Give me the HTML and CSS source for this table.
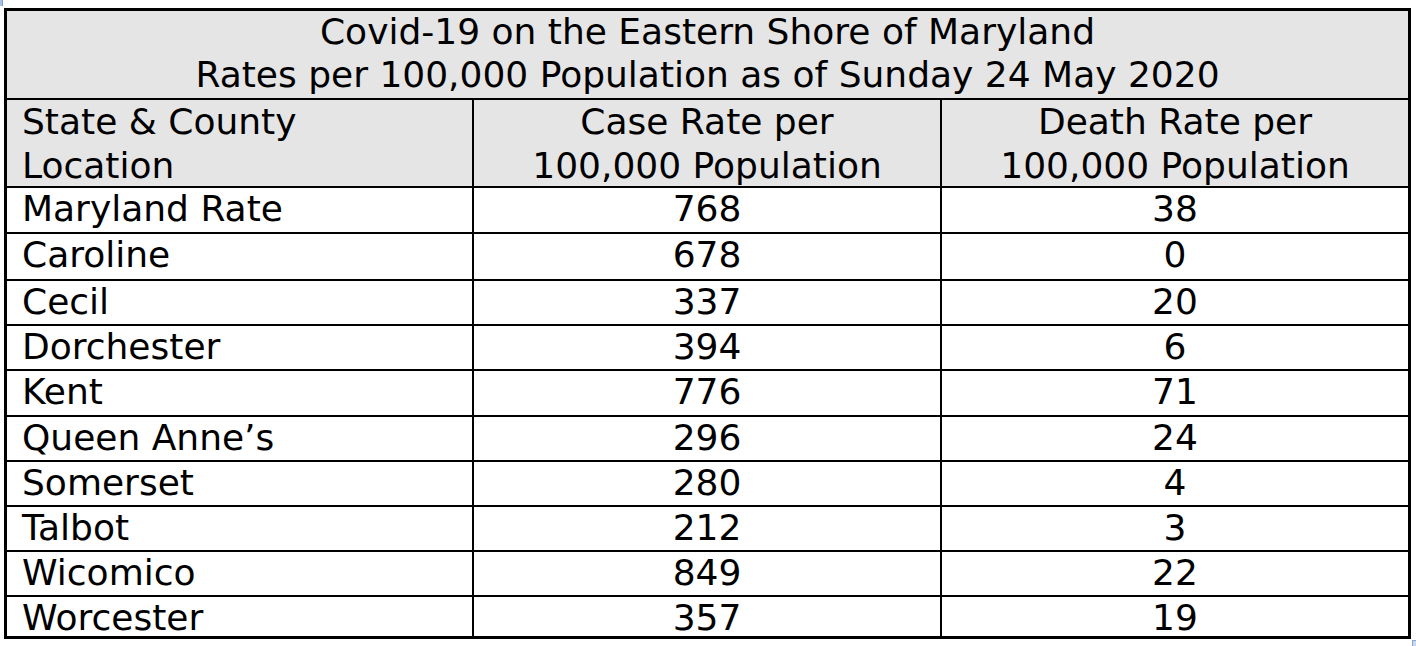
FILE: index.html
```html
<!DOCTYPE html>
<html lang="en">
<head>
<meta charset="utf-8">
<title>Covid-19 on the Eastern Shore of Maryland</title>
<link rel="stylesheet" href="styles.css">
</head>
<body>
<span class="handle handle-tl"></span>
<div class="sheet">
  <div class="title">
    <div class="line">Covid-19 on the Eastern Shore of Maryland</div>
    <div class="line">Rates per 100,000 Population as of Sunday 24 May 2020</div>
  </div>
  <div class="grid">
    <div class="cell head left"><span class="hl">State &amp; County</span><span class="hl">Location</span></div>
    <div class="cell head"><span class="hl">Case Rate per</span><span class="hl">100,000 Population</span></div>
    <div class="cell head last"><span class="hl">Death Rate per</span><span class="hl">100,000 Population</span></div>

    <div class="cell left">Maryland Rate</div><div class="cell">768</div><div class="cell last">38</div>
    <div class="cell left">Caroline</div><div class="cell">678</div><div class="cell last">0</div>
    <div class="cell left">Cecil</div><div class="cell">337</div><div class="cell last">20</div>
    <div class="cell left">Dorchester</div><div class="cell">394</div><div class="cell last">6</div>
    <div class="cell left">Kent</div><div class="cell">776</div><div class="cell last">71</div>
    <div class="cell left">Queen Anne’s</div><div class="cell">296</div><div class="cell last">24</div>
    <div class="cell left">Somerset</div><div class="cell">280</div><div class="cell last">4</div>
    <div class="cell left">Talbot</div><div class="cell">212</div><div class="cell last">3</div>
    <div class="cell left">Wicomico</div><div class="cell">849</div><div class="cell last">22</div>
    <div class="cell left bottom">Worcester</div><div class="cell bottom">357</div><div class="cell last bottom">19</div>
  </div>
</div>
<span class="handle handle-br"></span>
</body>
</html>
```
FILE: styles.css
```css
html, body {
  margin: 0;
  padding: 0;
  background: #ffffff;
}
body {
  position: relative;
  width: 1416px;
  height: 646px;
  overflow: hidden;
  font-family: "DejaVu Sans", Verdana, sans-serif;
  font-size: 36px;
  color: #000;
}
.sheet {
  margin: 8px 0 0 4px;
  width: 1401px;
  border: 3px solid #000;
}
.title {
  height: 87px;
  text-align: center;
  background: #e5e5e5;
  border-bottom: 2px solid #000;
  white-space: nowrap;
}
.title .line {
  height: 43px;
  line-height: 41px;
}
.grid {
  display: grid;
  grid-template-columns: 467px 468px 466px;
  grid-template-rows: 88px 46px 47px 45px 45px 46px 45px 45px 45px 45px 39px;
}
.cell {
  box-sizing: border-box;
  border-right: 2px solid #000;
  border-bottom: 2px solid #000;
  text-align: center;
  line-height: 42px;
  white-space: nowrap;
}
.cell.left {
  text-align: left;
  padding-left: 15px;
}
.cell.last {
  border-right: 0;
}
.cell.bottom {
  border-bottom: 0;
}
.cell.head {
  background: #e5e5e5;
}
.hl {
  display: block;
  height: 44px;
  line-height: 43px;
}
.handle {
  position: absolute;
  display: block;
}
.handle-tl {
  left: 0;
  top: 0;
  width: 2px;
  height: 6px;
  background: #a9c1e2;
  border-right: 1px solid #7f9fc9;
}
.handle-br {
  left: 1412px;
  top: 640px;
  width: 3px;
  height: 6px;
  border-left: 1px solid #8ba9d0;
  border-top: 1px solid #8ba9d0;
  background: #c9d8ec;
}
```
